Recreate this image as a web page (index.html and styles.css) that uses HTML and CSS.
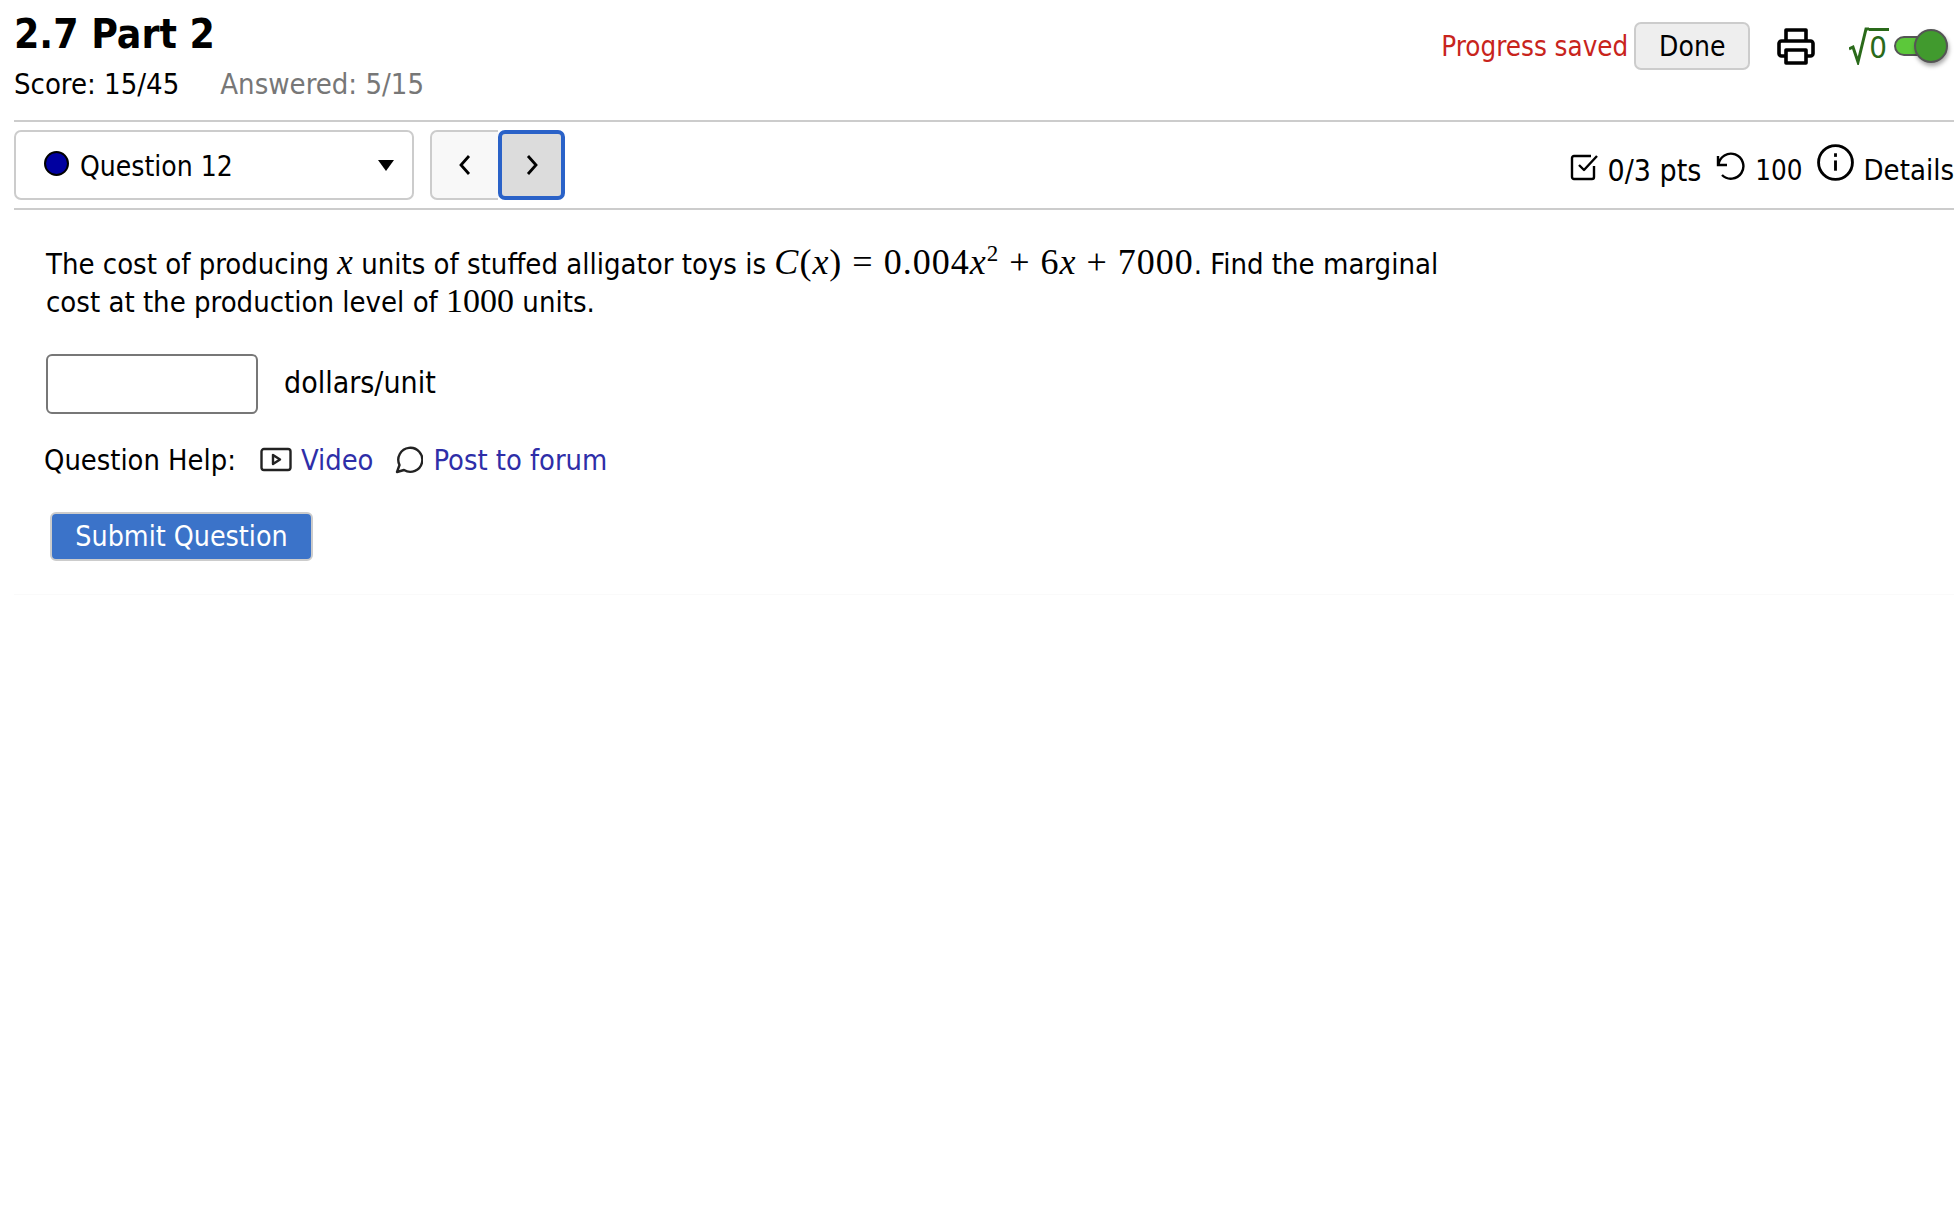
FILE: index.html
```html
<!DOCTYPE html>
<html lang="en">
<head>
    <meta charset="UTF-8">
    <title>2.7 Part 2</title>
    <link rel="stylesheet" href="styles.css">
</head>
<body>
    <header class="top">
        <div class="titles">
            <h1>2.7 Part 2</h1>
            <div class="scores"><span>Score: 15/45</span><span class="answered">Answered: 5/15</span></div>
        </div>
        <div class="tools">
            <span class="saved">Progress saved</span>
            <button class="done">Done</button>
            <svg class="printer" width="38" height="38" viewBox="0 0 38 38" fill="none" stroke="#000" stroke-width="3.600" stroke-linejoin="round">
                <path d="M9 14V3h20v11"/>
                <path d="M9 29H4.500a2.500 2.500 0 0 1-2.500-2.500V16.500A2.500 2.500 0 0 1 4.500 14h29a2.500 2.500 0 0 1 2.500 2.500v10a2.500 2.500 0 0 1-2.500 2.500H29"/>
                <path d="M9 23h20v13H9z"/>
            </svg>
            <span class="sqrt"><svg width="20" height="38" viewBox="0 0 20 38" fill="none" stroke="#2a6a1a" stroke-width="3"><path d="M0 22l4-2 5 15L17 2h3"/></svg><span class="sqrt-zero">0</span></span>
            <span class="toggle"><span class="knob"></span></span>
        </div>
    </header>

    <nav class="qbar">
        <div class="qselect">
            <span class="dot"></span>
            <span class="qname">Question 12</span>
            <span class="caret"></span>
        </div>
        <div class="arrows">
            <button class="arrow prev"><svg width="14" height="22" viewBox="0 0 14 22" fill="none" stroke="#000" stroke-width="2.800"><path d="M11 2L3 11l8 9"/></svg></button>
            <button class="arrow next"><svg width="14" height="22" viewBox="0 0 14 22" fill="none" stroke="#000" stroke-width="2.800"><path d="M3 2l8 9-8 9"/></svg></button>
        </div>
        <div class="meta">
            <svg class="check" width="30" height="30" viewBox="0 0 30 30" fill="none" stroke="#000" stroke-width="2.400" stroke-linejoin="round"><path d="M24 14v11a2 2 0 0 1-2 2H4a2 2 0 0 1-2-2V6a2 2 0 0 1 2-2h17"/><path d="M9 13l5 5L27 4"/></svg>
            <span class="pts">0/3 pts</span>
            <svg class="retry" width="32" height="32" viewBox="0 0 32 32" fill="none" stroke="#000" stroke-width="2.400"><path d="M5 6v9h9"/><path d="M5.500 14.500A12.500 12.500 0 1 1 9 25"/></svg>
            <span class="tries">100</span>
            <svg class="info" width="39" height="39" viewBox="0 0 38 38" fill="none" stroke="#000" stroke-width="2.800"><circle cx="19" cy="19" r="16.500"/><path d="M19 17v10"/><path d="M19 10v3.500"/></svg>
            <span>Details</span>
        </div>
    </nav>

    <main class="question">
        <p class="qtext">The cost of producing <i class="mv">x</i> units of stuffed alligator toys is <span class="math"><i>C</i>(<i>x</i>) = 0.004<i>x</i><sup>2</sup> + 6<i>x</i> + 7000</span>. Find the marginal<br>cost at the production level of <span class="math num">1000</span> units.</p>
        <div class="answer">
            <input class="ans-box" type="text">
            <span class="unit">dollars/unit</span>
        </div>
        <div class="help">
            <span class="help-label">Question Help:</span>
            <svg class="help-video" width="32" height="26" viewBox="0 0 32 26" fill="none" stroke="#222" stroke-width="2.400" stroke-linejoin="round"><rect x="1.500" y="2" width="29" height="21" rx="2.500"/><path d="M13 8v9l7-4.500z"/></svg>
            <a href="#">Video</a>
            <svg class="help-forum" width="28" height="30" viewBox="0 0 28 30" fill="none" stroke="#222" stroke-width="2.400" stroke-linejoin="round"><path d="M2 27l2.500-7A12 12 0 1 1 9 25z"/></svg>
            <a href="#">Post to forum</a>
        </div>
        <button class="submit">Submit Question</button>
    </main>
</body>
</html>
```

FILE: styles.css
```css
body {
    margin: 0;
    padding: 0 6px 0 14px;
    font-family: "DejaVu Sans", sans-serif;
    font-stretch: condensed;
    font-size: 29px;
    color: #000;
    background-color: white;
}

.top {
    display: flex;
    justify-content: space-between;
    height: 120px;
    border-bottom: 2px solid #ccc;
}

h1 {
    margin: 12px 0 0 0;
    font-size: 40.500px;
    line-height: 44px;
    font-weight: bold;
}

.scores {
    margin-top: 11px;
    line-height: 34px;
}

.answered {
    margin-left: 41px;
    color: #777;
}

.tools {
    display: flex;
    align-items: center;
    height: 92px;
    font-size: 28px;
}

.saved {
    color: #c8241c;
    margin-right: 6px;
    font-size: 27.500px;
}

.done {
    width: 116px;
    height: 48px;
    padding: 0;
    font: inherit;
    font-stretch: condensed;
    background-color: #eee;
    border: 2px solid #ccc;
    border-radius: 7px;
}

.printer {
    margin-left: 27px;
}

.sqrt {
    display: flex;
    align-items: center;
    margin-left: 34px;
    color: #2a6a1a;
}

.sqrt-zero {
    margin-top: -2px;
    padding: 0 2px 0 0;
    font-size: 31px;
    line-height: 32px;
    border-top: 3px solid #2a6a1a;
}

.toggle {
    position: relative;
    width: 30px;
    height: 16px;
    margin: 0 26px 0 5px;
    background-color: #5cc83a;
    border: 2px solid #555;
    border-radius: 10px;
}

.knob {
    position: absolute;
    left: 18px;
    top: -9px;
    width: 30px;
    height: 30px;
    background-color: #419a2e;
    border: 2px solid #555;
    border-radius: 50%;
    box-shadow: 1px 3px 4px rgba(0, 0, 0, 0.35);
}

.qbar {
    display: flex;
    align-items: center;
    height: 86px;
    border-bottom: 2px solid #ccc;
}

.qselect {
    display: flex;
    align-items: center;
    box-sizing: border-box;
    width: 400px;
    height: 70px;
    padding-left: 28px;
    font-size: 28px;
    border: 2px solid #ccc;
    border-radius: 7px;
}

.dot {
    width: 21px;
    height: 21px;
    margin-top: -3px;
    background-color: #0000a0;
    border: 2px solid #000;
    border-radius: 50%;
}

.qname {
    margin-left: 11px;
    padding-top: 2px;
}

.caret {
    margin-left: auto;
    margin-right: 18px;
    border-top: 11px solid #000;
    border-left: 8px solid transparent;
    border-right: 8px solid transparent;
}

.arrows {
    display: flex;
    margin-left: 16px;
}

.arrow {
    display: flex;
    align-items: center;
    justify-content: center;
    box-sizing: border-box;
    height: 70px;
    padding: 0;
}

.prev {
    width: 68px;
    background-color: #f8f8f8;
    border: 2px solid #ccc;
    border-right: none;
    border-radius: 7px 0 0 7px;
}

.next {
    width: 67px;
    background-color: #dcdcdc;
    border: 4px solid #2a62c8;
    border-radius: 7px;
}

.meta {
    display: flex;
    align-items: center;
    margin-left: auto;
    padding-top: 10px;
}

.check {
    margin-top: -6px;
}

.pts {
    margin-left: 8px;
    font-size: 30px;
}

.retry {
    margin-left: 12px;
    margin-top: -8px;
}

.tries {
    margin-left: 10px;
    font-size: 27.500px;
}

.info {
    margin-left: 13px;
    margin-right: 9px;
    margin-top: -16px;
}

.question {
    padding: 35px 0 0 32px;
    height: 385px;
    box-sizing: border-box;
    border-bottom: 1px solid #fafafa;
}

.qtext {
    margin: 0;
    line-height: 38px;
}

.math {
    font-family: "Liberation Serif", serif;
    font-size: 36px;
    line-height: 0;
    letter-spacing: 1px;
}

.math.num {
    font-size: 34px;
    letter-spacing: 0;
}

.mv {
    font-family: "Liberation Serif", serif;
    font-size: 35px;
    line-height: 0;
}

.math sup {
    font-size: 23px;
    line-height: 0;
}

.answer {
    display: flex;
    align-items: center;
    margin-top: 33px;
}

.ans-box {
    box-sizing: border-box;
    width: 212px;
    height: 60px;
    margin-right: 26px;
    border: 2px solid #777;
    border-radius: 6px;
}

.unit {
    padding-bottom: 3px;
    font-size: 30px;
}

.help {
    display: flex;
    align-items: center;
    height: 40px;
    margin: 26px 0 0 -2px;
    font-size: 28.800px;
}

.help-label {
    margin-right: 24px;
}

.help-video {
    margin-right: 9px;
}

.help-forum {
    margin: 0 10px 0 22px;
}

.help a {
    color: #2e2ea8;
    text-decoration: none;
}

.submit {
    display: block;
    box-sizing: border-box;
    width: 263px;
    height: 49px;
    margin: 32px 0 0 4px;
    padding: 0;
    font: inherit;
    font-size: 28.300px;
    font-stretch: condensed;
    color: white;
    background-color: #3b73c9;
    border: 2px solid #ccc;
    border-radius: 6px;
}
```
